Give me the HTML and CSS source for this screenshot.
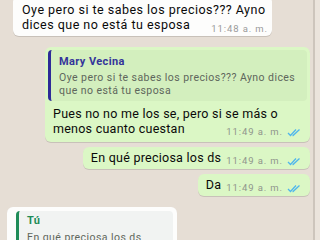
FILE: index.html
```html
<!DOCTYPE html>
<html lang="es">
<head>
<meta charset="utf-8">
<title>Chat</title>
<link rel="stylesheet" href="styles.css">
</head>
<body>
<div class="screen">
  <div class="chat">
    <div class="msg in first">
      <div class="body">Oye pero si te sabes los precios??? Ayno dices que no está tu esposa<span class="meta">11:48 a. m.</span></div>
    </div>

    <div class="msg out group">
      <div class="quote mary">
        <div class="qname">Mary Vecina</div>
        <div class="qtext">Oye pero si te sabes los precios??? Ayno dices que no está tu esposa</div>
      </div>
      <div class="body">Pues no no me los se, pero si se más o menos cuanto cuestan<span class="meta">11:49 a. m.<svg class="ticks" viewBox="0 0 14 9" width="14" height="9"><path d="M1 5 L3.5 7.5 L9 1.5 M5.5 7.5 L6 7.5 L12.5 1.5" fill="none" stroke="#4fb6ec" stroke-width="1.3"/></svg></span></div>
    </div>

    <div class="msg out">
      <div class="body">En qué preciosa los ds<span class="meta">11:49 a. m.<svg class="ticks" viewBox="0 0 14 9" width="14" height="9"><path d="M1 5 L3.5 7.5 L9 1.5 M5.5 7.5 L6 7.5 L12.5 1.5" fill="none" stroke="#4fb6ec" stroke-width="1.3"/></svg></span></div>
    </div>

    <div class="msg out">
      <div class="body">Da<span class="meta">11:49 a. m.<svg class="ticks" viewBox="0 0 14 9" width="14" height="9"><path d="M1 5 L3.5 7.5 L9 1.5 M5.5 7.5 L6 7.5 L12.5 1.5" fill="none" stroke="#4fb6ec" stroke-width="1.3"/></svg></span></div>
    </div>

    <div class="msg in group last">
      <div class="quote you">
        <div class="qname">Tú</div>
        <div class="qtext">En qué preciosa los ds</div>
      </div>
    </div>
  </div>
  <div class="edge"></div>
</div>
</body>
</html>
```

FILE: styles.css
```css
* { box-sizing: border-box; }

html, body {
  margin: 0;
  padding: 0;
}

body {
  width: 320px;
  height: 240px;
  overflow: hidden;
  background: #e6ded5;
  font-family: Roboto, "Noto Sans", "Liberation Sans", sans-serif;
  color: #0a0a0a;
}

.screen {
  display: flex;
  height: 240px;
}

.chat {
  flex: 1;
  display: flex;
  flex-direction: column;
  gap: 5px;
  margin-top: -4px;
  padding-right: 3px;
}

.edge {
  width: 7px;
  border-left: 2px solid #cdc5bc;
  background: #ebe4dc;
}

.msg {
  display: flow-root;
  font-size: 12.5px;
  letter-spacing: 0.25px;
  line-height: 15px;
  border-radius: 6px;
  box-shadow: 0 1px 0.5px rgba(0, 0, 0, 0.13);
}

.msg.group { margin-top: 6px; }

.in {
  background: #fdfdfc;
  align-self: flex-start;
}

.out {
  background: #dbf7c5;
  align-self: flex-end;
  padding: 3px 3px 2px;
}

.body {
  display: flow-root;
}

.first {
  margin-left: 13px;
  width: 259px;
  padding: 6px 4px 1px 9px;
  letter-spacing: 0.48px;
}

.meta {
  float: right;
  display: flex;
  align-items: center;
  gap: 4px;
  margin: 5px 0 0 5px;
  font-size: 9.5px;
  letter-spacing: 0.9px;
  line-height: 12px;
  color: #8f958c;
  white-space: nowrap;
}

.first .meta {
  margin-top: 6px;
  color: #9a9a9a;
}

.ticks {
  display: block;
  margin-top: 1px;
}

.out .body {
  padding: 0 6px 0 5px;
}

.group.out {
  width: 265px;
}

.group.out .body {
  padding-top: 5px;
  padding-bottom: 2px;
}

.quote {
  border-left: 3px solid #2d2c98;
  border-radius: 4px;
  background: rgba(0, 40, 0, 0.035);
  padding: 5px 4px 4px 8px;
}

.qname {
  font-size: 11px;
  line-height: 14px;
  letter-spacing: 0.4px;
  font-weight: 700;
  color: #34349a;
}

.qtext {
  margin-top: 3px;
  font-size: 10.5px;
  letter-spacing: 0.44px;
  line-height: 12.5px;
  color: #5e665c;
}

.last {
  margin-left: 7px;
  margin-top: 7px;
  width: 170px;
  padding: 4px 4px 4px 9px;
  border-radius: 6px 6px 0 0;
}

.quote.you {
  border-left-color: #1f8c58;
  background: #f1f3f2;
  padding-top: 3px;
  height: 40px;
}

.quote.you .qname {
  color: #1f8c58;
}

.quote.you .qtext {
  margin-top: 4px;
}
```
